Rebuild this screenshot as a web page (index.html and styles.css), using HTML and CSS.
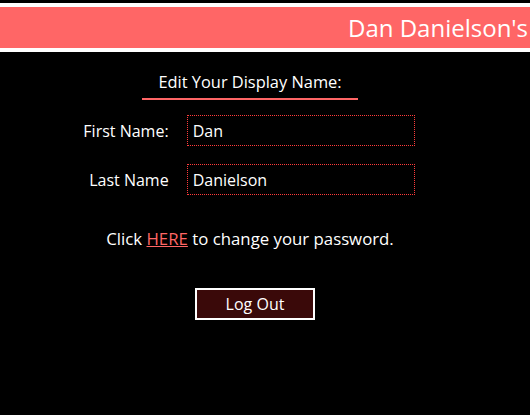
FILE: index.html
```html
<!DOCTYPE html>
<html>
<head>
<meta charset="utf-8">
<link rel="stylesheet" href="styles.css">
</head>
<body>
<header class="banner"><h1 class="banner-title">Dan Danielson's Profile</h1></header>
<main class="panel">
  <h2 class="title"><span class="title-text">Edit Your Display Name:</span></h2>
  <form class="fields">
    <label class="field-label" for="first">First Name:</label>
    <input class="field-input" id="first" type="text" value="Dan">
    <label class="field-label" for="last">Last Name</label>
    <input class="field-input" id="last" type="text" value="Danielson">
  </form>
  <p class="password">Click <a class="password-link" href="#">HERE</a> to change your password.</p>
  <button class="logout" type="button">Log Out</button>
</main>
</body>
</html>
```

FILE: styles.css
```css
html, body {
  margin: 0;
  padding: 0;
  background: #000;
  color: #fff;
  font-family: "Open Sans", "Noto Sans", sans-serif;
  overflow: hidden;
}

.banner {
  margin-top: 3px;
  border-top: 4px solid #fff;
  border-bottom: 4px solid #fff;
  background: #ff6666;
  height: 41px;
  display: flex;
  align-items: center;
  overflow: hidden;
  white-space: nowrap;
}

.banner-title {
  margin: 0 0 0 348px;
  font-size: 24px;
  font-weight: 400;
  color: #fff;
  line-height: 1;
}

.panel {
  width: 500px;
  display: flex;
  flex-direction: column;
  align-items: center;
}

.title {
  margin: 19px 0 0;
  font-size: 16.4px;
  font-weight: 400;
  line-height: 22px;
}

.title-text {
  display: inline-block;
  padding: 0 16px 5px;
  border-bottom: 2px solid #ff6666;
}

.fields {
  margin: 15px 0 0 -2px;
  display: grid;
  grid-template-columns: auto 228px;
  column-gap: 18px;
  row-gap: 18px;
  align-items: center;
}

.field-label {
  justify-self: end;
  font-size: 16px;
}

.field-input {
  box-sizing: border-box;
  width: 228px;
  height: 31px;
  padding: 0 5px;
  background: #000;
  color: #fff;
  border: 1px dotted #ff3b3b;
  font-family: inherit;
  font-size: 16px;
  outline: none;
}

.password {
  margin: 33px 0 0;
  font-size: 16.8px;
  line-height: 22px;
}

.password-link {
  color: #ff6666;
}

.logout {
  margin-top: 38px;
  box-sizing: border-box;
  width: 120px;
  height: 32px;
  margin-left: 10px;
  background: #3a0909;
  color: #fff;
  border: 2px solid #fff;
  font-family: inherit;
  font-size: 16px;
  cursor: pointer;
}
```
